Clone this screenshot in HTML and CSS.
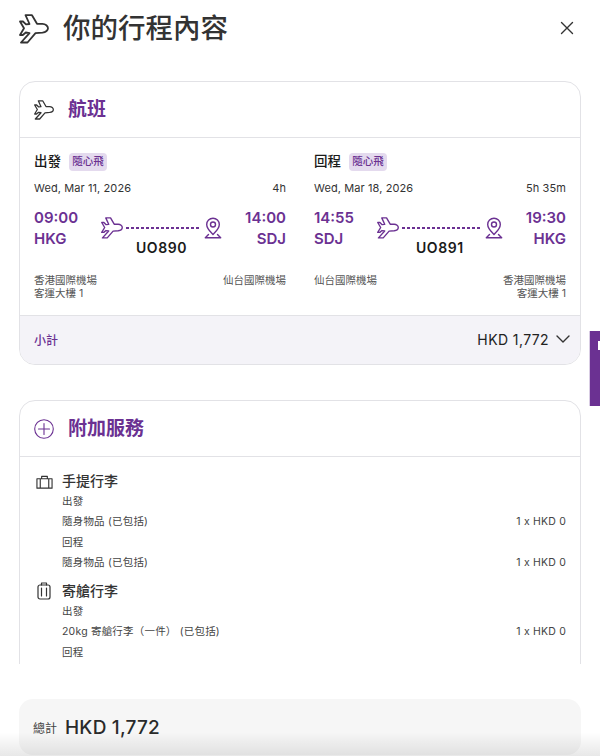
FILE: index.html
```html
<!DOCTYPE html>
<html lang="zh-Hant">
<head>
<meta charset="utf-8">
<title>你的行程內容</title>
<link rel="stylesheet" href="styles.css">
</head>
<body>
<svg class="defs" width="0" height="0" aria-hidden="true">
  <symbol id="plane" viewBox="0 0 30 30">
    <path d="M18 9.800 13 1.200H6.500l4 8.800-3.500.4L4 7.500H1l4 6.800-4 6.700h2.800l3-2.500 3.700.6L2 28.500h6.500l8-9.300 7-.5c3.500-.4 5.500-2.700 5.500-4.400 0-2.300-2.500-4.500-5.500-4.500z"/>
  </symbol>
  <symbol id="pin" viewBox="0 0 18 22">
    <path d="M9 1.200a6.300 6.300 0 0 0-6.300 6.300c0 4.300 4.300 7.800 6.300 10 2-2.200 6.300-5.700 6.300-10A6.300 6.300 0 0 0 9 1.200z"/>
    <circle cx="9" cy="7.500" r="2.500"/>
    <path d="M4.500 17.500 1.300 20.800h15.400l-3.200-3.300"/>
  </symbol>
</svg>
<div class="page">
  <header class="top">
    <svg class="ic-title"><use href="#plane"/></svg>
    <h1>你的行程內容</h1>
    <svg class="ic-close" viewBox="0 0 14 14"><path d="M1.500 1.500l11 11M12.500 1.500l-11 11"/></svg>
  </header>
  <main class="scroller">
    <section class="card">
      <div class="card-head">
        <svg class="ic-head"><use href="#plane"/></svg>
        <h2>航班</h2>
      </div>
      <div class="flights">
        <article class="flight">
          <div class="leg"><strong>出發</strong><span class="badge">隨心飛</span></div>
          <div class="meta"><span>Wed, Mar 11, 2026</span><span>4h</span></div>
          <div class="route">
            <div class="end"><b>09:00</b><b>HKG</b></div>
            <div class="mid">
              <div class="track"><svg class="ic-plane"><use href="#plane"/></svg><i class="dash"></i><svg class="ic-pin"><use href="#pin"/></svg></div>
              <div class="fno">UO890</div>
            </div>
            <div class="end right"><b>14:00</b><b>SDJ</b></div>
          </div>
          <div class="airports"><div>香港國際機場<br>客運大樓 1</div><div class="right">仙台國際機場</div></div>
        </article>
        <article class="flight">
          <div class="leg"><strong>回程</strong><span class="badge">隨心飛</span></div>
          <div class="meta"><span>Wed, Mar 18, 2026</span><span>5h 35m</span></div>
          <div class="route">
            <div class="end"><b>14:55</b><b>SDJ</b></div>
            <div class="mid">
              <div class="track"><svg class="ic-plane"><use href="#plane"/></svg><i class="dash"></i><svg class="ic-pin"><use href="#pin"/></svg></div>
              <div class="fno">UO891</div>
            </div>
            <div class="end right"><b>19:30</b><b>HKG</b></div>
          </div>
          <div class="airports"><div>仙台國際機場</div><div class="right">香港國際機場<br>客運大樓 1</div></div>
        </article>
      </div>
      <div class="subtotal">
        <span class="sub-label">小計</span>
        <span class="sub-val">HKD 1,772<svg class="ic-chev" viewBox="0 0 14 8"><path d="M1 1l6 6 6-6"/></svg></span>
      </div>
    </section>
    <section class="card">
      <div class="card-head">
        <svg class="ic-head" viewBox="0 0 20 20"><circle class="pu" cx="10" cy="10" r="9.300"/><path class="pu" d="M10 4.500v11M4.500 10h11"/></svg>
        <h2>附加服務</h2>
      </div>
      <div class="extras">
        <div class="group">
          <div class="g-head">
            <svg class="ic-bag" viewBox="0 0 18 14"><path d="M1 3.500h16v10H1zM4.500 3.500v10M13.500 3.500v10M6 3.500V1h6v2.500"/></svg>
            <h3>手提行李</h3>
          </div>
          <div class="row">出發</div>
          <div class="row"><span>隨身物品 (已包括)</span><span>1 x HKD 0</span></div>
          <div class="row">回程</div>
          <div class="row"><span>隨身物品 (已包括)</span><span>1 x HKD 0</span></div>
        </div>
        <div class="group">
          <div class="g-head">
            <svg class="ic-case" viewBox="0 0 14 18"><rect x="1" y="3" width="12" height="14" rx="2"/><path d="M4.500 6v8M9.500 6v8M4.500 3V1h5v2"/></svg>
            <h3>寄艙行李</h3>
          </div>
          <div class="row">出發</div>
          <div class="row"><span>20kg 寄艙行李（一件） (已包括)</span><span>1 x HKD 0</span></div>
          <div class="row">回程</div>
        </div>
      </div>
    </section>
  </main>
  <footer class="foot">
    <div class="total"><span class="t-label">總計</span><span class="t-val">HKD 1,772</span></div>
  </footer>
  <div class="side-tab"><i></i></div>
</div>
</body>
</html>
```

FILE: styles.css
```css
* { box-sizing: border-box; }
html, body { margin: 0; height: 100%; }
body { background: #fff; font-family: Inter, "Noto Sans CJK TC", sans-serif; color: #333; overflow: hidden; }
.defs { position: absolute; }
.page { position: relative; width: 600px; height: 756px; display: flex; flex-direction: column; overflow: hidden; }
svg { fill: none; stroke-linejoin: round; stroke-linecap: round; display: block; flex: none; }
h1, h2, h3 { margin: 0; font-weight: 500; }

.top { height: 56px; flex: none; display: flex; align-items: center; padding: 0 26px 0 19px; }
.ic-title { width: 30px; height: 30px; stroke: #333; stroke-width: 1.800; margin-top: 1px; }
.top h1 { flex: 1; margin-left: 14px; font-size: 27.500px; font-weight: 500; color: #333; line-height: 56px; }
.ic-close { width: 14px; height: 14px; stroke: #333; stroke-width: 1.400; }

.scroller { height: 608px; flex: none; overflow: hidden; padding: 25px 19px 0; }
.card { border: 1px solid #e2e2e6; border-radius: 16px; margin-bottom: 35px; overflow: hidden; background: #fff; }
.card-head { height: 56px; display: flex; align-items: center; padding-left: 14px; border-bottom: 1px solid #e2e2e6; }
.ic-head { width: 20px; height: 20px; stroke: #333; stroke-width: 1.900; }
.ic-head .pu { stroke: #6b3192; stroke-width: 1.100; }
.card-head h2 { margin-left: 14px; font-size: 19px; font-weight: 700; color: #6b3192; line-height: 54px; }

.flights { display: grid; grid-template-columns: 252px 252px; column-gap: 28px; padding: 15px 14px 15px; }
.leg { display: flex; align-items: center; height: 18px; }
.leg strong { font-size: 13.500px; font-weight: 500; line-height: 16px; align-self: flex-start; color: #1a1a1a; }
.badge { margin-left: 8px; width: 38px; height: 18px; border-radius: 4px; background: #e4daee; color: #6b3192; font-size: 10.500px; font-weight: 500; line-height: 17px; text-align: center; }
.meta { display: flex; justify-content: space-between; margin-top: 9px; font-size: 11px; line-height: 16px; letter-spacing: .1px; color: #333; }
.route { display: flex; margin-top: 11px; height: 50px; }
.end { display: flex; flex-direction: column; }
.end b { font-size: 15px; font-weight: 600; line-height: 21px; color: #6b3192; }
.right { text-align: right; }
.mid { flex: 1; margin: 10px 23px 0; min-width: 0; }
.track { display: flex; align-items: center; height: 22px; }
.ic-plane { width: 22px; height: 22px; stroke: #6b3192; stroke-width: 1.900; }
.dash { flex: 1; margin: 0 5px 0 3px; height: 2px; background: repeating-linear-gradient(to right, #6b3192 0 3px, transparent 3px 5px); }
.ic-pin { width: 18px; height: 22px; stroke: #6b3192; stroke-width: 1.400; }
.fno { text-align: center; font-size: 14px; font-weight: 600; line-height: 18px; color: #1a1a1a; letter-spacing: .6px; }
.airports { display: flex; justify-content: space-between; margin-top: 17px; font-size: 10.500px; line-height: 13px; color: #555; }

.subtotal { height: 49px; display: flex; align-items: center; justify-content: space-between; padding: 0 10px 2px 14px; background: #f4f3f8; border-top: 1px solid #e2e2e6; }
.sub-label { font-size: 12px; font-weight: 500; color: #6b3192; }
.sub-val { display: flex; align-items: center; font-size: 14px; letter-spacing: .4px; color: #222; }
.ic-chev { width: 14px; height: 8px; margin-left: 7px; stroke: #333; stroke-width: 1.400; }

.extras { padding: 14px 14px 40px; }
.group + .group { margin-top: 7.500px; }
.g-head { display: flex; align-items: center; height: 20px; margin-bottom: .5px; }
.ic-bag { width: 17px; height: 14px; margin: 2px 9px 0 2px; stroke: #333; stroke-width: 1.200; }
.ic-case { width: 14px; height: 18px; margin: 0 11px 0 3px; stroke: #333; stroke-width: 1.200; }
.g-head h3 { font-size: 14px; color: #333; line-height: 20px; }
.row { display: flex; justify-content: space-between; padding-left: 28px; font-size: 10.500px; line-height: 20.500px; color: #444; letter-spacing: .2px; }

.foot { flex: 1; padding: 35px 19px 0; position: relative; }
.foot::after { content: ""; position: absolute; left: 0; right: 0; bottom: 0; height: 24px; background: linear-gradient(to bottom, rgba(0,0,0,0), rgba(0,0,0,.09)); }
.total { height: 56px; display: flex; align-items: center; padding-left: 14px; border-radius: 14px; background: #f6f6f6; }
.t-label { font-size: 12px; color: #444; }
.t-val { margin-left: 8px; font-size: 19px; font-weight: 500; color: #2a2a2a; letter-spacing: .2px; }

.side-tab { position: absolute; left: 589px; top: 331px; width: 11px; height: 75px; background: #6b3192; border-left: 1px solid #d9cde4; }
.side-tab i { position: absolute; left: 8px; top: 10px; width: 2px; height: 9px; background: #fff; }
```
